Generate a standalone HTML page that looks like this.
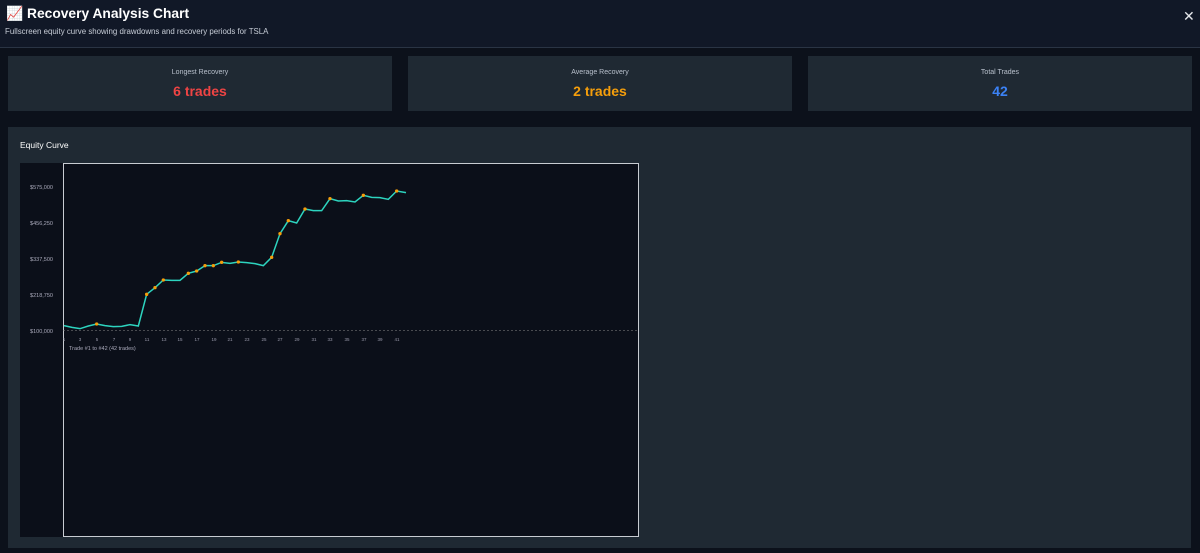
<!DOCTYPE html>
<html><head><meta charset="utf-8"><style>
*{margin:0;padding:0;box-sizing:border-box}
body{width:1200px;height:553px;background:#0c111b;font-family:"Liberation Sans",sans-serif;overflow:hidden;position:relative;color:#fff}
.hdr{position:absolute;left:0;top:0;width:1200px;height:48px;background:#111827;border-bottom:1px solid #2a3444}
.t{position:absolute;left:6px;top:6px;font-size:13.8px;font-weight:bold}
.s{position:absolute;left:5px;top:27px;font-size:7.9px;color:#c6ccd6}
.x{position:absolute;left:1183px;top:8px;font-size:14px;color:#e5e7eb}
.card{position:absolute;top:56px;height:55px;width:384px;background:#1f2933;text-align:center}
.card .l{font-size:7px;color:#b8c0cc;margin-top:13px}
.card .v{font-size:14px;font-weight:bold;margin-top:7px}
.panel{position:absolute;left:8px;top:127px;width:1183px;height:421px;background:#1f2933}
.pt{position:absolute;left:12px;top:13px;font-size:8.5px;color:#fff}
</style></head><body>
<div class="hdr"><div class="t">📈 Recovery Analysis Chart</div><div class="s">Fullscreen equity curve showing drawdowns and recovery periods for TSLA</div><div class="x">✕</div></div>
<div class="card" style="left:8px"><div class="l">Longest Recovery</div><div class="v" style="color:#ef4444">6 trades</div></div>
<div class="card" style="left:408px"><div class="l">Average Recovery</div><div class="v" style="color:#f59e0b">2 trades</div></div>
<div class="card" style="left:808px"><div class="l">Total Trades</div><div class="v" style="color:#3b82f6">42</div></div>
<div class="panel"><div class="pt">Equity Curve</div></div>
<svg style="position:absolute;left:0;top:0" width="1200" height="553">
<rect x="20" y="163" width="619" height="374" fill="#0b0f19"/>
<rect x="63.5" y="163.5" width="575" height="373" fill="none" stroke="#c8ccd2" stroke-width="1"/>
<line x1="63" y1="330.5" x2="639" y2="330.5" stroke="#888" stroke-width="0.6" stroke-dasharray="2,2"/>
<g font-size="5.5" fill="#aab" text-anchor="end">
<text x="53" y="189">$575,000</text><text x="53" y="225">$456,250</text><text x="53" y="261">$337,500</text><text x="53" y="297">$218,750</text><text x="53" y="333">$100,000</text>
</g>
<g font-size="4.5" fill="#99a" text-anchor="middle">
<text x="64" y="341">1</text><text x="80" y="341">3</text><text x="97" y="341">5</text><text x="114" y="341">7</text><text x="130" y="341">9</text><text x="147" y="341">11</text><text x="164" y="341">13</text><text x="180" y="341">15</text><text x="197" y="341">17</text><text x="214" y="341">19</text><text x="230" y="341">21</text><text x="247" y="341">23</text><text x="264" y="341">25</text><text x="280" y="341">27</text><text x="297" y="341">29</text><text x="314" y="341">31</text><text x="330" y="341">33</text><text x="347" y="341">35</text><text x="364" y="341">37</text><text x="380" y="341">39</text><text x="397" y="341">41</text>
</g>
<text x="69" y="350" font-size="5.5" fill="#aab">Trade #1 to #42 (42 trades)</text>
<g transform="translate(0,150) scale(0.33333)">
<polyline fill="none" stroke="#2dd4bf" stroke-width="4.5" points="192,527 216,532 240,536 265,528 290,522 315,527 340,530 365,529 390,524 415,528 440,433 465,413 490,390 515,391 540,391 565,370 590,363 615,347 640,347 665,337 690,340 715,336 740,338 765,341 790,347 815,322 840,251 865,212 890,219 915,177 940,182 965,182 990,146 1015,153 1040,152 1065,156 1090,136 1115,142 1140,143 1165,148 1190,123 1218,128"/>
<g fill="#f59e0b">
<circle cx="290" cy="522" r="5"/><circle cx="440" cy="433" r="5"/><circle cx="465" cy="413" r="5"/><circle cx="490" cy="390" r="5"/><circle cx="565" cy="370" r="5"/><circle cx="590" cy="363" r="5"/><circle cx="615" cy="347" r="5"/><circle cx="640" cy="347" r="5"/><circle cx="665" cy="337" r="5"/><circle cx="715" cy="336" r="5"/><circle cx="815" cy="322" r="5"/><circle cx="840" cy="251" r="5"/><circle cx="865" cy="212" r="5"/><circle cx="915" cy="177" r="5"/><circle cx="990" cy="146" r="5"/><circle cx="1090" cy="136" r="5"/><circle cx="1190" cy="123" r="5"/>
</g></g>
</svg>
</body></html>
